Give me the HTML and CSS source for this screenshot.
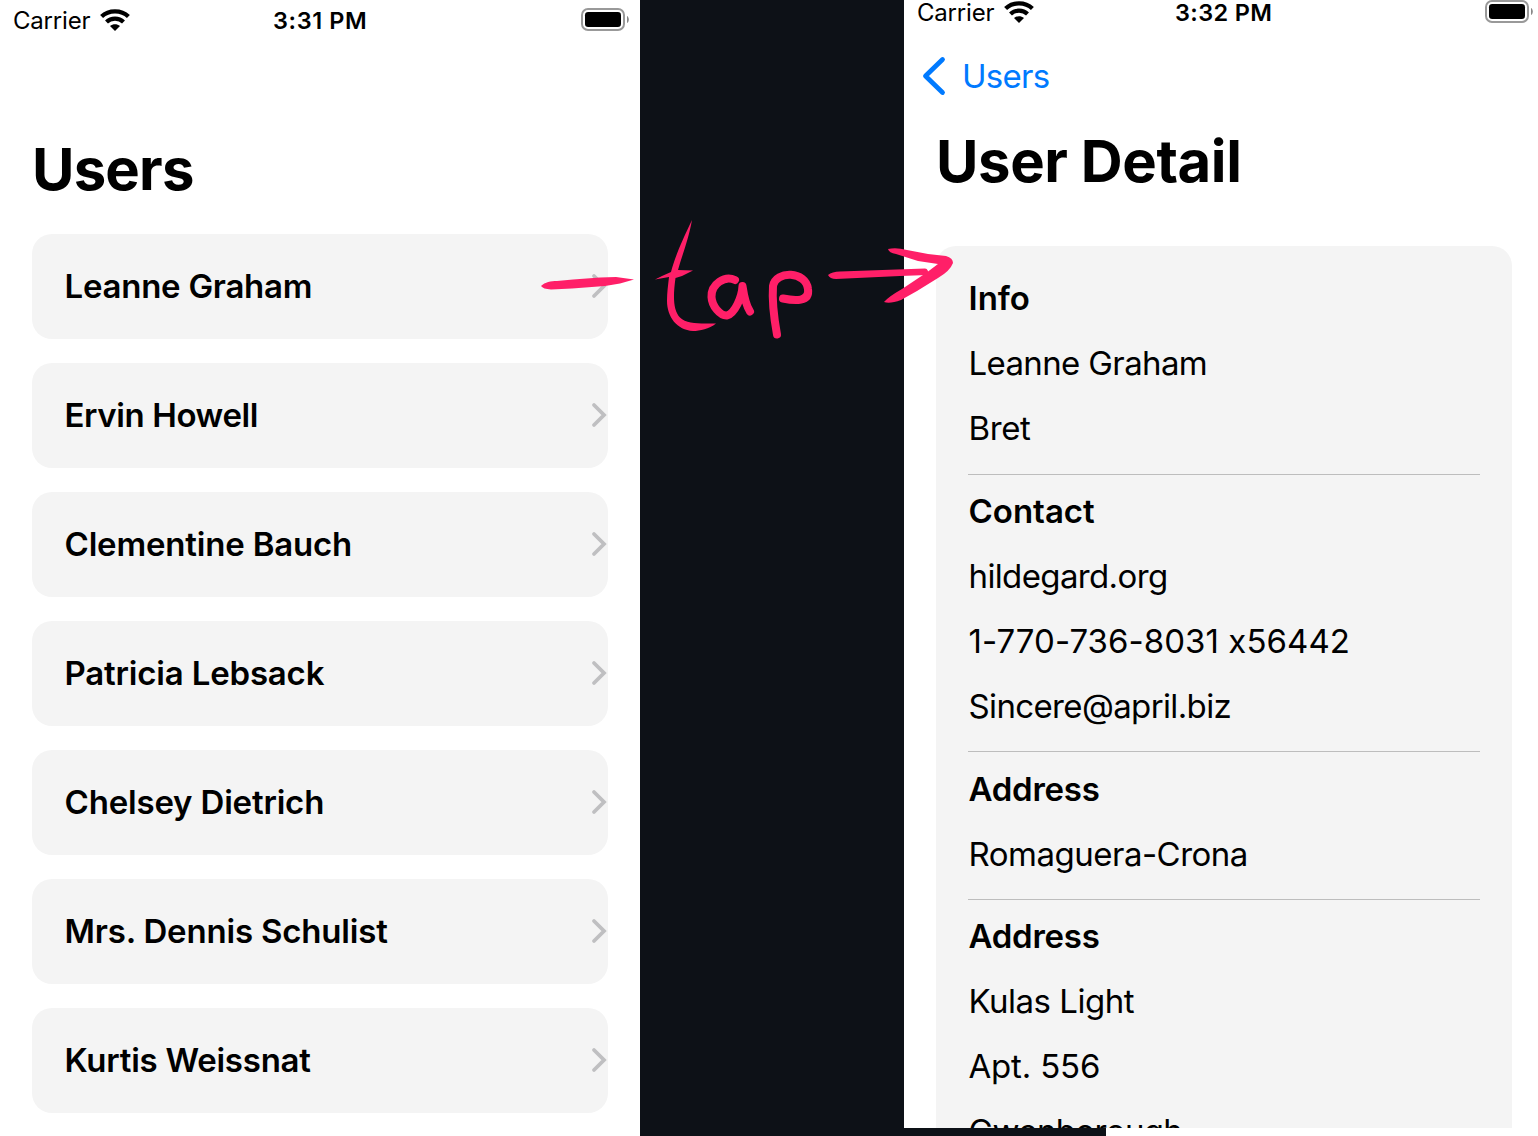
FILE: index.html
```
<!DOCTYPE html>
<html lang="en">
<head>
<meta charset="utf-8">
<title>Users</title>
<link rel="stylesheet" href="styles.css">
</head>
<body>
<svg class="defs" aria-hidden="true">
  <symbol id="wifi" viewBox="0 0 30 22">
    <g fill="none" stroke="#000" stroke-width="4.200">
      <path d="M1.6 7.600C8.700.6 21.300.6 28.400 7.600"/>
      <path d="M6.5 13C11 8.6 19 8.6 23.5 13"/>
    </g>
    <path d="M10 17C13 14.600 17 14.600 20 17L15 22Z"/>
  </symbol>
  <symbol id="battery" viewBox="0 0 48 24">
    <rect x="1" y="1" width="42" height="21" rx="6" fill="#fff" stroke="#999" stroke-width="2"/>
    <rect x="4" y="4" width="36" height="15" rx="3.2"/>
    <path d="M46 8C48.4 9 48.4 14 46 15Z" fill="#888"/>
  </symbol>
  <symbol id="chevron" viewBox="0 0 16 26">
    <path d="M3 3L13 13L3 23" fill="none" stroke="#bfbfc1" stroke-width="3.800" stroke-linecap="round" stroke-linejoin="miter"/>
  </symbol>
</svg>
<main class="board">
  <section class="phone">
    <header class="status">
      <span class="carrier">Carrier</span>
      <svg class="wifi"><use href="#wifi"/></svg>
      <span class="time">3:31 PM</span>
      <svg class="battery"><use href="#battery"/></svg>
    </header>
    <h1 class="title">Users</h1>
    <ul class="users">
      <li class="user"><span class="tight-2">Leanne Graham</span><svg class="chevron"><use href="#chevron"/></svg></li>
      <li class="user"><span class="tight-3">Ervin Howell</span><svg class="chevron"><use href="#chevron"/></svg></li>
      <li class="user"><span class="tight-1">Clementine Bauch</span><svg class="chevron"><use href="#chevron"/></svg></li>
      <li class="user"><span class="tight-1">Patricia Lebsack</span><svg class="chevron"><use href="#chevron"/></svg></li>
      <li class="user"><span class="tight-1">Chelsey Dietrich</span><svg class="chevron"><use href="#chevron"/></svg></li>
      <li class="user"><span class="tight-1">Mrs. Dennis Schulist</span><svg class="chevron"><use href="#chevron"/></svg></li>
      <li class="user"><span class="tight-2">Kurtis Weissnat</span><svg class="chevron"><use href="#chevron"/></svg></li>
    </ul>
  </section>
  <div class="right">
    <section class="phone detail">
      <header class="status">
        <span class="carrier">Carrier</span>
        <svg class="wifi"><use href="#wifi"/></svg>
        <span class="time">3:32 PM</span>
        <svg class="battery"><use href="#battery"/></svg>
      </header>
      <nav class="back">
        <svg class="back-icon" viewBox="0 0 24 40"><path d="M20.5 3.5L3.500 20L20.5 36.5" fill="none" stroke="#007aff" stroke-width="4.800" stroke-linecap="round" stroke-linejoin="round"/></svg>
        <span>Users</span>
      </nav>
      <h1 class="title">User Detail</h1>
      <div class="card">
        <div class="group"><h2>Info</h2><p class="tight-5">Leanne Graham</p><p class="tight-3">Bret</p></div>
        <div class="group"><h2>Contact</h2><p class="tight-5">hildegard.org</p><p class="phone-number">1-770-736-8031 x56442</p><p class="tight-5">Sincere@april.biz</p></div>
        <div class="group"><h2 class="tight-2">Address</h2><p class="tight-4">Romaguera-Crona</p></div>
        <div class="group"><h2 class="tight-2">Address</h2><p class="tight-4">Kulas Light</p><p class="tight-1">Apt. 556</p><p class="tight-5">Gwenborough</p></div>
      </div>
    </section>
    <div class="strip"></div>
  </div>
  <svg class="ink" viewBox="530 210 440 140">
    <path d="M541 286C545 282 551 281 557 281L573 279.500L600 277.500L616 277L634 279.500L620 283.500L605 286L572 288.500L551 289.500Q543 289 541 286Z"/>
    <path d="M692 220C688 242 682 255 678 270L693 270.500L682 276L675.500 278C673 296 673 310 680 317.500C687 325 702 323 716 323.500C709 329 700 331 693 331C677 330 667 317 667 301C667 292 668 286 669 277L655 279.500L662 276L671 272C674 260 680 245 692 220Z"/>
    <g fill="none" stroke="#ff1f68" stroke-linecap="round" stroke-linejoin="round" stroke-width="8">
      <path d="M735 280C725 275 711 284 711.500 297C712 306 720 316 727 315.500C735 313 742 297 742.500 286C744 296 747 307 750 311.500"/>
      <path d="M777 334.500C774 318 772 300 773 286C776 270 806 271 808 289C810 302 795 301 783 298.500"/>
    </g>
    <path d="M828 275Q832 271.500 840 271.500L925 268.500Q929 269 928 275L900 276L836 279Q830 279 828 275Z"/>
    <path d="M888 249Q896 247 907 250L928 254L946 256Q953 258 953 263Q950 271 938 278L917 291L901 300Q890 304 884 302Q888 297 902 289L926 273L938 264L918 261L896 254Q889 253 888 249Z"/>
  </svg>
</main>
</body>
</html>
```
FILE: styles.css
```
* { box-sizing: border-box; }
body { margin: 0; font-family: Inter, "Liberation Sans", sans-serif; color: #000; background: #0d1117; }
h1, h2, p, ul { margin: 0; padding: 0; list-style: none; }
.defs { position: absolute; width: 0; height: 0; }
.board { position: relative; display: flex; justify-content: space-between; width: 1538px; height: 1136px; overflow: hidden; background: #0d1117; }
.phone { display: flex; flex-direction: column; width: 640px; height: 1136px; background: #fff; overflow: hidden; }
.right { width: 634px; }
.detail { width: 634px; height: 1128px; }
.strip { width: 432px; height: 8px; margin-left: 202px; background: #fff; }

.status { display: flex; align-items: center; flex: none; width: 640px; height: 40px; padding: 0 11px 0 13px; font-size: 24px; line-height: 24px; }
.detail .status { height: 24px; }
.carrier { width: 87px; padding-top: 2px; letter-spacing: -0.2px; white-space: nowrap; }
.wifi { width: 30px; height: 22px; }
.time { flex: 1; padding: 2px 0 0 143px; font-weight: 600; font-size: 23.500px; letter-spacing: 0.6px; white-space: nowrap; }
.detail .time { padding-left: 141px; letter-spacing: 0.35px; }
.battery { width: 48px; height: 24px; }

.title { flex: none; padding-left: 32px; font-size: 58px; font-weight: 700; line-height: 70px; letter-spacing: -0.8px; white-space: nowrap; }
.phone > .title { margin-top: 94px; }
.detail > .title { margin-top: 30px; letter-spacing: -0.4px; }

.users { display: flex; flex-direction: column; gap: 24px; padding: 30px 32px 0; }
.user { display: flex; align-items: center; justify-content: space-between; height: 105px; padding: 0 1px 1px 32.500px; border-radius: 20px; background: #f4f4f4; font-size: 33px; font-weight: 600; line-height: 40px; white-space: nowrap; }
.chevron { width: 16px; height: 26px; }

.back { display: flex; align-items: center; gap: 16px; flex: none; height: 40px; margin-top: 32px; padding-left: 18px; color: #007aff; font-size: 33px; line-height: 40px; letter-spacing: -0.7px; }
.back-icon { width: 24px; height: 40px; }

.card { width: 576px; height: 960px; margin: 50px 0 0 32px; padding: 32px 32px 0; border-radius: 20px 20px 0 0; background: #f4f4f4; flex: none; }
.group { display: flex; flex-direction: column; gap: 24px; font-size: 33px; line-height: 41px; white-space: nowrap; }
.group:first-child { padding-bottom: 0.5px; }
.group + .group { margin-top: 24px; padding-top: 16.500px; border-top: 1px solid #bdbdbd; }
.group h2 { font-size: 33px; font-weight: 600; }
.group h2, .group p { padding-left: 0.5px; }

.tight-1 { letter-spacing: -0.18px; }
.tight-2 { letter-spacing: -0.25px; }
.tight-3 { letter-spacing: -0.4px; }
.tight-4 { letter-spacing: -0.5px; }
.tight-5 { letter-spacing: -0.63px; }
.phone-number { letter-spacing: 0.05px; font-feature-settings: "calt" 0; }

.ink { position: absolute; left: 530px; top: 210px; width: 440px; height: 140px; fill: #ff1f68; }
```
